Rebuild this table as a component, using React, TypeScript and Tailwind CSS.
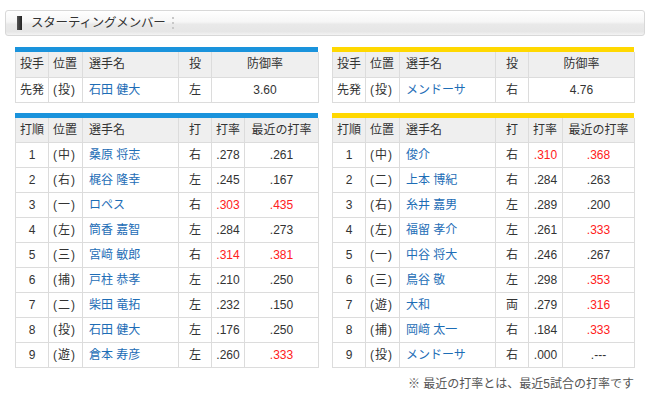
import React from "react";

type Batter = { o: number; pos: string; name: string; hand: string; avg: string; avgRed?: boolean; rec: string; recRed?: boolean };

const leftBatters: Batter[] = [
  { o: 1, pos: "中", name: "桑原 将志", hand: "右", avg: ".278", rec: ".261" },
  { o: 2, pos: "右", name: "梶谷 隆幸", hand: "左", avg: ".245", rec: ".167" },
  { o: 3, pos: "一", name: "ロペス", hand: "右", avg: ".303", avgRed: true, rec: ".435", recRed: true },
  { o: 4, pos: "左", name: "筒香 嘉智", hand: "左", avg: ".284", rec: ".273" },
  { o: 5, pos: "三", name: "宮﨑 敏郎", hand: "右", avg: ".314", avgRed: true, rec: ".381", recRed: true },
  { o: 6, pos: "捕", name: "戸柱 恭孝", hand: "左", avg: ".210", rec: ".250" },
  { o: 7, pos: "二", name: "柴田 竜拓", hand: "左", avg: ".232", rec: ".150" },
  { o: 8, pos: "投", name: "石田 健大", hand: "左", avg: ".176", rec: ".250" },
  { o: 9, pos: "遊", name: "倉本 寿彦", hand: "左", avg: ".260", rec: ".333", recRed: true },
];

const rightBatters: Batter[] = [
  { o: 1, pos: "中", name: "俊介", hand: "右", avg: ".310", avgRed: true, rec: ".368", recRed: true },
  { o: 2, pos: "二", name: "上本 博紀", hand: "右", avg: ".284", rec: ".263" },
  { o: 3, pos: "右", name: "糸井 嘉男", hand: "左", avg: ".289", rec: ".200" },
  { o: 4, pos: "左", name: "福留 孝介", hand: "左", avg: ".261", rec: ".333", recRed: true },
  { o: 5, pos: "一", name: "中谷 将大", hand: "右", avg: ".246", rec: ".267" },
  { o: 6, pos: "三", name: "鳥谷 敬", hand: "左", avg: ".298", rec: ".353", recRed: true },
  { o: 7, pos: "遊", name: "大和", hand: "両", avg: ".279", rec: ".316", recRed: true },
  { o: 8, pos: "捕", name: "岡﨑 太一", hand: "右", avg: ".184", rec: ".333", recRed: true },
  { o: 9, pos: "投", name: "メンドーサ", hand: "右", avg: ".000", rec: ".---" },
];

const th = "h-[25px] border border-[#dcdcdc] bg-[#efefef] font-normal text-[#333] p-0";
const td = "h-[25px] border border-[#dcdcdc] bg-white text-[#333] p-0";
const link = "text-[#1d6db6]";

function Pos({ p }: { p: string }) {
  return (
    <span className="whitespace-nowrap">
      (<span className="ml-[1px] mr-[1px]">{p}</span>)
    </span>
  );
}

function PitcherTable({ bar, name, hand, era, narrow }: { bar: string; name: string; hand: string; era: string; narrow?: boolean }) {
  return (
    <div>
      <div className={`h-[5px] ${bar}`} />
      <table className="w-full table-fixed border-collapse text-[12px] leading-none">
        <colgroup>
          <col className="w-[33px]" />
          <col className="w-[34px]" />
          <col className="w-[96px]" />
          <col className="w-[33px]" />
          <col className={narrow ? "w-[106px]" : "w-[107px]"} />
        </colgroup>
        <thead>
          <tr>
            <th className={`${th} text-left pl-[4px] border-t-0`}>投手</th>
            <th className={`${th} text-left pl-[4px] border-t-0`}>位置</th>
            <th className={`${th} text-left pl-[6px] border-t-0`}>選手名</th>
            <th className={`${th} text-center border-t-0`}>投</th>
            <th className={`${th} text-center border-t-0`}>防御率</th>
          </tr>
        </thead>
        <tbody>
          <tr>
            <td className={`${td} pl-[4px]`}>先発</td>
            <td className={`${td} pl-[4px]`}><Pos p="投" /></td>
            <td className={`${td} pl-[6px]`}><span className={link}>{name}</span></td>
            <td className={`${td} text-center`}>{hand}</td>
            <td className={`${td} text-center`}>{era}</td>
          </tr>
        </tbody>
      </table>
    </div>
  );
}

function BattingTable({ bar, rows, right }: { bar: string; rows: Batter[]; right?: boolean }) {
  return (
    <div>
      <div className={`h-[5px] ${bar}`} />
      <table className="w-full table-fixed border-collapse text-[12px] leading-none">
        <colgroup>
          <col className="w-[33px]" />
          <col className="w-[34px]" />
          <col className="w-[96px]" />
          <col className="w-[33px]" />
          <col className={right ? "w-[34px]" : "w-[33px]"} />
          <col className={right ? "w-[72px]" : "w-[74px]"} />
        </colgroup>
        <thead>
          <tr>
            <th className={`${th} text-left pl-[4px] border-t-0`}>打順</th>
            <th className={`${th} text-left pl-[4px] border-t-0`}>位置</th>
            <th className={`${th} text-left pl-[6px] border-t-0`}>選手名</th>
            <th className={`${th} text-center border-t-0`}>打</th>
            <th className={`${th} text-left pl-[4px] border-t-0`}>打率</th>
            <th className={`${th} text-center border-t-0`}>最近の打率</th>
          </tr>
        </thead>
        <tbody>
          {rows.map((r) => (
            <tr key={r.o}>
              <td className={`${td} text-center`}>{r.o}</td>
              <td className={`${td} pl-[4px]`}><Pos p={r.pos} /></td>
              <td className={`${td} pl-[6px]`}><span className={link}>{r.name}</span></td>
              <td className={`${td} text-center`}>{r.hand}</td>
              <td className={`${td} text-center ${r.avgRed ? "text-[#ff2020]" : ""}`}>{r.avg}</td>
              <td className={`${td} text-center ${r.recRed ? "text-[#ff2020]" : ""}`}>{r.rec}</td>
            </tr>
          ))}
        </tbody>
      </table>
    </div>
  );
}

export default function App() {
  return (
    <div
      className="w-[650px] h-[397px] bg-white pt-[10px] px-[5px] overflow-hidden"
      style={{ fontFamily: '"Liberation Sans", "Noto Sans CJK JP", sans-serif' }}
    >
      <div className="h-[26px] w-[640px] rounded-[3px] border border-[#d8d8d8] bg-[linear-gradient(to_bottom,#ffffff,#f6f6f6_45%,#e9e9e9_55%,#e6e6e6_85%,#f3f3f3)] flex items-center pl-[11px]">
        <div className="w-[5px] h-[14px] bg-[linear-gradient(to_right,#555,#222)]" />
        <span className="ml-[9px] text-[12.5px] text-[#333] tracking-[-0.2px]">スターティングメンバー</span>
        <div className="ml-[6px] flex flex-col gap-[3px]">
          <div className="w-[2px] h-[2px] bg-[#c8c8c8]" />
          <div className="w-[2px] h-[2px] bg-[#c8c8c8]" />
          <div className="w-[2px] h-[2px] bg-[#c8c8c8]" />
        </div>
      </div>
      <div className="flex gap-[14px] pl-[10px] mt-[11px]">
        <div className="w-[303px] flex flex-col gap-[10px]">
          <PitcherTable bar="bg-[#1a93dc]" name="石田 健大" hand="左" era="3.60" />
          <BattingTable bar="bg-[#1a93dc]" rows={leftBatters} />
        </div>
        <div className="w-[302px] flex flex-col gap-[10px]">
          <PitcherTable bar="bg-[#ffd800]" name="メンドーサ" hand="右" era="4.76" narrow />
          <BattingTable bar="bg-[#ffd800]" rows={rightBatters} right />
        </div>
      </div>
      <div className="w-[629px] text-right text-[12px] text-[#555] mt-[7px]">※ 最近の打率とは、最近5試合の打率です</div>
    </div>
  );
}
